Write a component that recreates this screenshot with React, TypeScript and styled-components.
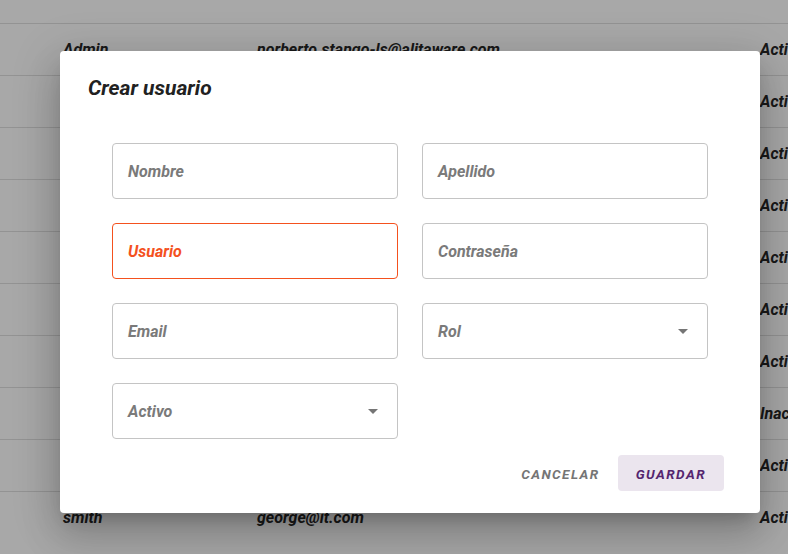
import React from 'react'
import styled, { createGlobalStyle } from 'styled-components'

const rows = [
  { user: 'Admin', email: 'norberto.stango-ls@alitaware.com', state: 'Activo' },
  { user: 'jperez', email: 'jperez@alitaware.com', state: 'Activo' },
  { user: 'mlopez', email: 'mlopez@alitaware.com', state: 'Activo' },
  { user: 'agarcia', email: 'agarcia@alitaware.com', state: 'Activo' },
  { user: 'lrossi', email: 'lrossi@alitaware.com', state: 'Activo' },
  { user: 'cfernandez', email: 'cfernandez@alitaware.com', state: 'Activo' },
  { user: 'dmartinez', email: 'dmartinez@alitaware.com', state: 'Activo' },
  { user: 'pgomez', email: 'pgomez@alitaware.com', state: 'Inactivo' },
  { user: 'rdiaz', email: 'rdiaz@alitaware.com', state: 'Activo' },
  { user: 'smith', email: 'george@it.com', state: 'Activo' },
]

const fields = [
  { label: 'Nombre' },
  { label: 'Apellido' },
  { label: 'Usuario', error: true },
  { label: 'Contraseña' },
  { label: 'Email' },
  { label: 'Rol', select: true },
  { label: 'Activo', select: true },
]

export default function App() {
  return (
    <>
      <GlobalStyle />
      <Page>
        <Table>
          {rows.map((r) => (
            <Row key={r.user}>
              <Cell>{r.user}</Cell>
              <Cell>{r.email}</Cell>
              <Cell>{r.state}</Cell>
            </Row>
          ))}
        </Table>
        <Backdrop>
          <Dialog>
            <Title>Crear usuario</Title>
            <Form>
              {fields.map((f) => (
                <Field key={f.label} $error={f.error}>
                  <Label $error={f.error}>{f.label}</Label>
                  {f.select && (
                    <svg width='24' height='24' viewBox='0 0 24 24'>
                      <path d='M7 10l5 5 5-5z' fill='rgba(0,0,0,0.54)' />
                    </svg>
                  )}
                </Field>
              ))}
            </Form>
            <Actions>
              <TextButton>Cancelar</TextButton>
              <SaveButton>Guardar</SaveButton>
            </Actions>
          </Dialog>
        </Backdrop>
      </Page>
    </>
  )
}

const GlobalStyle = createGlobalStyle`
  html, body {
    margin: 0;
    padding: 0;
    background: #fff;
    font-family: Roboto, 'Noto Sans', sans-serif;
    overflow: hidden;
  }
`

const Page = styled.div`
  position: relative;
  width: 788px;
  height: 554px;
  overflow: hidden;
  background: #fff;
`

const Table = styled.div`
  padding-top: 23px;
`

const Row = styled.div`
  display: grid;
  grid-template-columns: 194px 503px 1fr;
  align-items: center;
  height: 51px;
  padding-left: 63px;
  border-top: 1px solid #e0e0e0;
`

const Cell = styled.div`
  font-size: 16px;
  font-weight: 700;
  font-style: italic;
  color: #262626;
  white-space: nowrap;
`

const Backdrop = styled.div`
  position: absolute;
  inset: 0;
  background: rgba(0, 0, 0, 0.34);
  display: flex;
  align-items: flex-start;
  padding: 51px 0 0 60px;
`

const Dialog = styled.div`
  width: 700px;
  background: #fff;
  border-radius: 4px;
  box-shadow: 0px 11px 15px -7px rgba(0, 0, 0, 0.2),
    0px 24px 38px 3px rgba(0, 0, 0, 0.14), 0px 9px 46px 8px rgba(0, 0, 0, 0.12);
  display: flex;
  flex-direction: column;
`

const Title = styled.h2`
  margin: 0;
  padding: 23px 28px 0;
  font-size: 21px;
  line-height: 29px;
  font-weight: 700;
  font-style: italic;
  color: #212121;
`

const Form = styled.div`
  display: grid;
  grid-template-columns: 286px 286px;
  gap: 24px;
  margin: 40px 52px 0;
`

const Field = styled.div<{ $error?: boolean }>`
  box-sizing: border-box;
  height: 56px;
  display: flex;
  align-items: center;
  justify-content: space-between;
  padding: 0 12px 0 15px;
  border: 1px solid ${(p) => (p.$error ? '#f4511e' : '#c4c4c4')};
  border-radius: 4px;
`

const Label = styled.span<{ $error?: boolean }>`
  font-size: 16px;
  font-weight: 700;
  font-style: italic;
  color: ${(p) => (p.$error ? '#f4511e' : '#7a7a7a')};
`

const Actions = styled.div`
  display: flex;
  justify-content: flex-end;
  align-items: center;
  padding: 16px 36px 22px;
`

const TextButton = styled.button`
  height: 36px;
  padding: 2px 18px 0;
  border: none;
  border-radius: 4px;
  background: transparent;
  font-family: Roboto, sans-serif;
  font-size: 13.5px;
  font-weight: 700;
  font-style: italic;
  letter-spacing: 1.45px;
  text-transform: uppercase;
  color: #757575;
`

const SaveButton = styled(TextButton)`
  background: #ebe5ee;
  color: #55256f;
`
